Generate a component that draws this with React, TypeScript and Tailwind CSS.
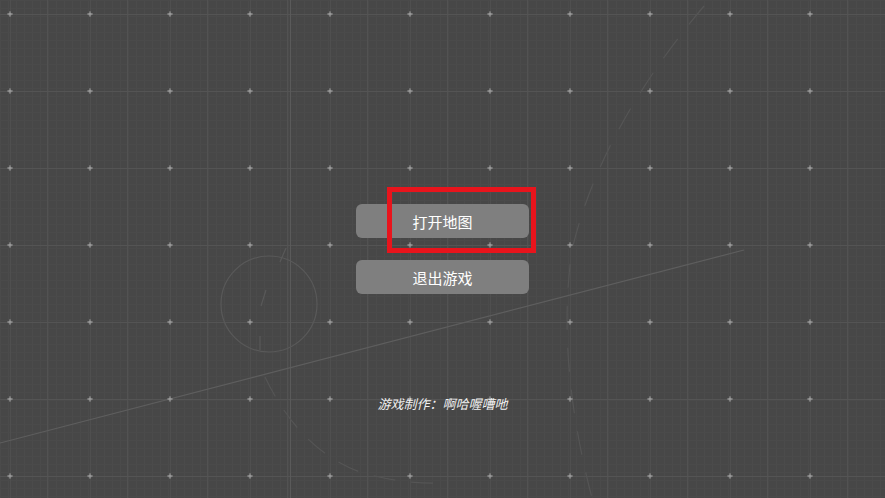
import React from "react";

function Background() {
  const dotsX = Array.from({ length: 12 }, (_, i) => 10 + 80 * i);
  const dotsY = Array.from({ length: 7 }, (_, j) => 14 + 77 * j);
  const majorX = Array.from({ length: 11 }, (_, i) => 47 + 80 * i);
  const fineX = Array.from({ length: 112 }, (_, i) => i * 8);
  const fineY = Array.from({ length: 64 }, (_, i) => i * 8);
  return (
    <svg className="absolute inset-0" width="885" height="498" viewBox="0 0 885 498">
      {fineX.map((x) => (
        <line key={"fx" + x} x1={x + 0.5} y1={0} x2={x + 0.5} y2={498} stroke="#4b4b4b" strokeWidth="1" />
      ))}
      {fineY.map((y) => (
        <line key={"fy" + y} x1={0} y1={y + 0.5} x2={885} y2={y + 0.5} stroke="#4a4a4a" strokeWidth="1" />
      ))}
      {majorX.map((x) => (
        <line key={"mx" + x} x1={x + 0.5} y1={0} x2={x + 0.5} y2={498} stroke="#525252" strokeWidth="1" />
      ))}
      {dotsX.map((x) => (
        <line key={"dx" + x} x1={x + 0.5} y1={0} x2={x + 0.5} y2={498} stroke="#4f4f4f" strokeWidth="1" />
      ))}
      {dotsY.map((y) => (
        <line key={"dy" + y} x1={0} y1={y + 0.5} x2={885} y2={y + 0.5} stroke="#545454" strokeWidth="1" />
      ))}
      <line x1={290.5} y1={0} x2={290.5} y2={498} stroke="#5a5a5a" strokeWidth="1" />
      <line x1={0} y1={443} x2={744} y2={250} stroke="#5e5e5e" strokeWidth="1.2" />
      <circle cx={269} cy={304} r={48} fill="none" stroke="#595959" strokeWidth="1.2" />
      <line x1={266} y1={290} x2={261} y2={306} stroke="#595959" strokeWidth="1.2" />
      <line x1={286} y1={248} x2={280} y2={262} stroke="#595959" strokeWidth="1.2" />
      <line x1={260} y1={336} x2={260} y2={350} stroke="#595959" strokeWidth="1.2" />
      <path
        d="M 704 6 Q 600 130 572 250 Q 556 360 592 498"
        fill="none"
        stroke="#555555"
        strokeWidth="1.2"
        strokeDasharray="24 18"
      />
      <path
        d="M 265 377 Q 300 450 360 472 Q 400 484 440 483"
        fill="none"
        stroke="#555555"
        strokeWidth="1.2"
        strokeDasharray="22 16"
      />
      {dotsX.map((x) =>
        dotsY.map((y) => (
          <g key={x + "-" + y}>
            <circle cx={x} cy={y} r={1.6} fill="#bdbdbd" />
            <line x1={x - 3} y1={y} x2={x + 3} y2={y} stroke="#8a8a8a" strokeWidth="1" />
            <line x1={x} y1={y - 3} x2={x} y2={y + 3} stroke="#8a8a8a" strokeWidth="1" />
          </g>
        ))
      )}
    </svg>
  );
}

export default function App() {
  return (
    <div
      className="relative w-[885px] h-[498px] overflow-hidden bg-[#474747]"
      style={{ fontFamily: '"Noto Sans CJK SC", "Noto Sans", sans-serif' }}
    >
      <Background />
      <div className="relative flex flex-col items-center pt-[204px]">
        <div className="flex flex-col gap-[22px]">
          <button className="w-[173px] h-[34px] rounded-[6px] bg-[#7f7f7f] text-white text-[15px] leading-none flex items-center justify-center">
            打开地图
          </button>
          <button className="w-[173px] h-[34px] rounded-[6px] bg-[#7f7f7f] text-white text-[15px] leading-none flex items-center justify-center">
            退出游戏
          </button>
        </div>
        <div className="mt-[103px] text-[13px] leading-none italic text-[#f0f0f0]">游戏制作：啊哈喔嘈吔</div>
      </div>
      <div className="absolute left-[387px] top-[187px] w-[149px] h-[66px] border-[5px] border-[#e8141c]" />
    </div>
  );
}
